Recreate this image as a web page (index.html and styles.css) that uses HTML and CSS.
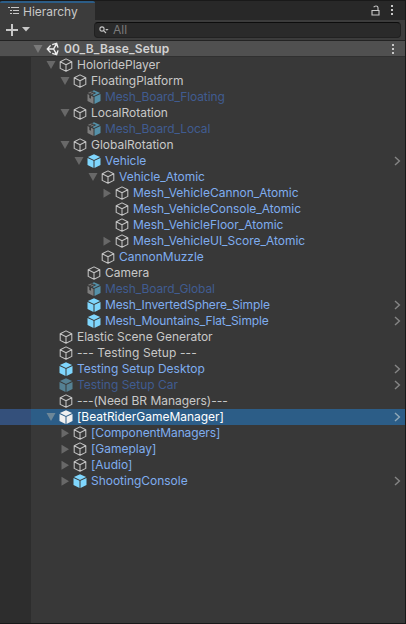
FILE: index.html
```
<!DOCTYPE html>
<html lang="en">
<head>
<meta charset="utf-8">
<title>Hierarchy</title>
<link rel="stylesheet" href="styles.css">
</head>
<body>
<svg class="defs" width="0" height="0" aria-hidden="true">
  <symbol id="cube" viewBox="0 0 14 14"><path class="line" d="M7 .9 12.8 3.7V10.4L7 13.3 1.2 10.4V3.7ZM1.2 3.7 7 6.7 12.8 3.7M7 6.7V13.3"/></symbol>
  <symbol id="solid" viewBox="0 0 14 14"><path d="M7 .2 13.1 3 7 5.9.9 3ZM.5 3.9 6.5 6.8V13.9L.5 11ZM13.5 3.9 7.5 6.8V13.9L13.5 11Z"/></symbol>
  <symbol id="model" viewBox="0 0 14 14"><path class="grey" d="M.5 4 2.3 4.9V8L4 8.8V5.7L6.5 6.9V13.9L.5 11ZM.9 3 4.1 1.5 5.2 2 2.3 3.6ZM3.1 4 6.2 2.4 7.3 3 4.4 4.6Z"/><path class="teal" d="M7 .2 13.1 3 7 5.9 5.4 5.1 9.3 3.1 5 1.2ZM13.5 3.9 7.5 6.8V13.9L13.5 11Z"/></symbol>
  <symbol id="down" viewBox="0 0 10 10"><path d="M.5 1H9.5L5 9Z"/></symbol>
  <symbol id="right" viewBox="0 0 10 10"><path d="M1.5.7 9 5.2 1.5 9.7Z"/></symbol>
  <symbol id="go" viewBox="0 0 7 10"><path class="chev" d="M1 1 5.4 5 1 9"/></symbol>
  <symbol id="dots" viewBox="0 0 4 12"><path d="M1 1H3V3H1ZM1 5H3V7H1ZM1 9H3V11H1Z"/></symbol>
</svg>
<main class="panel">
  <header class="tabs">
    <div class="tab">
      <svg class="tab-icon" viewBox="0 0 11 10"><path d="M0 1H2V2H0ZM3 1H11V2H3ZM2 4H4V5H2ZM5 4H11V5H5ZM2 7H4V8H2ZM5 7H11V8H5Z"/></svg>
      <span>Hierarchy</span>
    </div>
    <div class="tab-tools">
      <svg class="lock" viewBox="0 0 9 11"><path d="M1 5.5H8V10H1ZM7 5.5V2.7Q7 1 5 1 3.2 1 2.7 2.3"/></svg>
      <svg class="dots"><use href="#dots"/></svg>
    </div>
  </header>
  <div class="toolbar">
    <svg class="plus" viewBox="0 0 12 12"><path d="M5 0H7V5H12V7H7V12H5V7H0V5H5Z"/></svg>
    <svg class="caret" viewBox="0 0 8 5"><path d="M0 0H8L4 4.5Z"/></svg>
    <div class="search">
      <svg class="lens" viewBox="0 0 10 8"><circle cx="3" cy="3" r="2.1"/><path d="M4.6 4.6 7 7"/><path class="fill" d="M6.2 3H9.6L7.9 4.8Z"/></svg>
      <span>All</span>
    </div>
  </div>
  <div class="scene">
    <svg class="arrow"><use href="#down"/></svg>
    <svg class="logo" viewBox="0 0 14 14"><path d="M6.2 2.6 10.6 1.3 12 5.6M12 8.4 10.6 12.7 6.2 11.4M4.6 10.6 1.3 7 4.6 3.4M1.3 7H7.6L10.6 1.6M7.6 7 10.6 12.4"/></svg>
    <span class="scene-name">00_B_Base_Setup</span>
    <svg class="dots"><use href="#dots"/></svg>
  </div>
  <div class="content">
    <aside class="gutter"><div class="gutter-selected"></div></aside>
    <div class="tree">
      <div class="row d1"><svg class="arrow"><use href="#down"/></svg><svg class="icon"><use href="#cube"/></svg><span>HoloridePlayer</span></div>
      <div class="row d2"><svg class="arrow"><use href="#down"/></svg><svg class="icon"><use href="#cube"/></svg><span>FloatingPlatform</span></div>
      <div class="row d3 off tight"><i class="arrow"></i><svg class="icon"><use href="#model"/></svg><span>Mesh_Board_Floating</span></div>
      <div class="row d2"><svg class="arrow"><use href="#down"/></svg><svg class="icon"><use href="#cube"/></svg><span>LocalRotation</span></div>
      <div class="row d3 off tight"><i class="arrow"></i><svg class="icon"><use href="#model"/></svg><span>Mesh_Board_Local</span></div>
      <div class="row d2"><svg class="arrow"><use href="#down"/></svg><svg class="icon"><use href="#cube"/></svg><span>GlobalRotation</span></div>
      <div class="row d3 prefab"><svg class="arrow"><use href="#down"/></svg><svg class="icon"><use href="#solid"/></svg><span>Vehicle</span><svg class="go"><use href="#go"/></svg></div>
      <div class="row d4 prefab"><svg class="arrow"><use href="#down"/></svg><svg class="icon"><use href="#cube"/></svg><span>Vehicle_Atomic</span></div>
      <div class="row d5 prefab"><svg class="arrow"><use href="#right"/></svg><svg class="icon"><use href="#cube"/></svg><span>Mesh_VehicleCannon_Atomic</span></div>
      <div class="row d5 prefab"><i class="arrow"></i><svg class="icon"><use href="#cube"/></svg><span>Mesh_VehicleConsole_Atomic</span></div>
      <div class="row d5 prefab"><i class="arrow"></i><svg class="icon"><use href="#cube"/></svg><span>Mesh_VehicleFloor_Atomic</span></div>
      <div class="row d5 prefab"><svg class="arrow"><use href="#right"/></svg><svg class="icon"><use href="#cube"/></svg><span>Mesh_VehicleUI_Score_Atomic</span></div>
      <div class="row d4 prefab"><i class="arrow"></i><svg class="icon"><use href="#cube"/></svg><span>CannonMuzzle</span></div>
      <div class="row d3"><i class="arrow"></i><svg class="icon"><use href="#cube"/></svg><span>Camera</span></div>
      <div class="row d3 off tight"><i class="arrow"></i><svg class="icon"><use href="#model"/></svg><span>Mesh_Board_Global</span></div>
      <div class="row d3 prefab tight"><i class="arrow"></i><svg class="icon"><use href="#solid"/></svg><span>Mesh_InvertedSphere_Simple</span><svg class="go"><use href="#go"/></svg></div>
      <div class="row d3 prefab tight"><i class="arrow"></i><svg class="icon"><use href="#solid"/></svg><span>Mesh_Mountains_Flat_Simple</span><svg class="go"><use href="#go"/></svg></div>
      <div class="row d1"><i class="arrow"></i><svg class="icon"><use href="#cube"/></svg><span>Elastic Scene Generator</span></div>
      <div class="row d1"><i class="arrow"></i><svg class="icon"><use href="#cube"/></svg><span class="loose">--- Testing Setup ---</span></div>
      <div class="row d1 prefab"><i class="arrow"></i><svg class="icon"><use href="#solid"/></svg><span>Testing Setup Desktop</span><svg class="go"><use href="#go"/></svg></div>
      <div class="row d1 off"><i class="arrow"></i><svg class="icon"><use href="#solid"/></svg><span>Testing Setup Car</span><svg class="go"><use href="#go"/></svg></div>
      <div class="row d1"><i class="arrow"></i><svg class="icon"><use href="#cube"/></svg><span>---(Need BR Managers)---</span></div>
      <div class="row d1 selected"><svg class="arrow"><use href="#down"/></svg><svg class="icon"><use href="#solid"/></svg><span>[BeatRiderGameManager]</span><svg class="go"><use href="#go"/></svg></div>
      <div class="row d2 prefab tight"><svg class="arrow"><use href="#right"/></svg><svg class="icon"><use href="#cube"/></svg><span>[ComponentManagers]</span></div>
      <div class="row d2 prefab"><svg class="arrow"><use href="#right"/></svg><svg class="icon"><use href="#cube"/></svg><span>[Gameplay]</span></div>
      <div class="row d2 prefab"><svg class="arrow"><use href="#right"/></svg><svg class="icon"><use href="#cube"/></svg><span>[Audio]</span></div>
      <div class="row d2 prefab"><svg class="arrow"><use href="#right"/></svg><svg class="icon"><use href="#solid"/></svg><span>ShootingConsole</span><svg class="go"><use href="#go"/></svg></div>
    </div>
  </div>
</main>
</body>
</html>
```
FILE: styles.css
```
* { box-sizing: border-box; }
body { margin: 0; background: #191919; font: 12px/16px Inter, "Liberation Sans", sans-serif; letter-spacing: -.02px; color: #c8c8c8; }
svg { display: block; flex: none; fill: currentColor; }
.defs { position: absolute; }
.panel { width: 405px; height: 623px; display: flex; flex-direction: column; background: #383838; overflow: hidden; }
.tabs { height: 20px; flex: none; display: flex; justify-content: space-between; background: #282828; border-top: 1px solid #191919; }
.tab { width: 95px; height: 19px; padding-left: 8px; display: flex; align-items: center; background: #3c3c3c; border-top: 2px solid #2c5d87; border-radius: 2px 2px 0 0; }
.tab-icon { width: 11px; height: 10px; margin: -2px 4px 0 0; }
.tab-tools { display: flex; align-items: flex-start; gap: 10px; padding: 3px 11px 0 0; }
.lock { width: 9px; height: 11px; margin-top: 1px; fill: none; stroke: currentColor; stroke-width: 1.1; }
.dots { width: 4px; height: 12px; }
.toolbar { height: 21px; flex: none; display: flex; align-items: center; padding: 0 4px 1px 6px; background: #3c3c3c; border-bottom: 1px solid #232323; }
.plus { width: 12px; height: 12px; }
.caret { width: 8px; height: 5px; margin-left: 4px; }
.search { margin-left: 64px; flex: 1; height: 16px; display: flex; align-items: center; padding-left: 4px; background: #2a2a2a; border: 1px solid #212121; border-top-color: #0d0d0d; border-radius: 4px; color: #7b7b7b; }
.lens { width: 10px; height: 8px; margin-right: 4px; fill: none; stroke: #c4c4c4; stroke-width: 1.1; }
.lens .fill { fill: #c4c4c4; stroke: none; }
.scene { height: 15px; flex: none; display: flex; align-items: center; padding: 0 10px 0 33px; background: #505050; }
.scene-name { font-weight: 600; letter-spacing: .14px; flex: 1; color: #d2d2d2; }
.arrow { width: 10px; height: 10px; color: #686868; flex: none; }
.scene .arrow { color: #7a7a7a; }
.logo { width: 14px; height: 14px; margin: 0 4px 0 3px; fill: none; stroke: #eee; stroke-width: 1.4; }
.content { flex: 1; display: flex; border-top: 1px solid #303030; }
.gutter { width: 31px; padding-top: 352px; background: #2d2d2d; }
.gutter-selected { height: 16px; background: #34507b; }
.tree { flex: 1; }
.row { height: 16px; display: flex; align-items: center; white-space: nowrap; }
.icon { width: 14px; height: 14px; margin: 0 4px 0 3px; color: #c4c4c4; }
.line { fill: none; stroke: currentColor; stroke-width: 1.05; stroke-linejoin: round; }
.d1 { padding-left: 15px; }
.d2 { padding-left: 29px; }
.d3 { padding-left: 43px; }
.d4 { padding-left: 57px; }
.d5 { padding-left: 71px; }
.tight { letter-spacing: -.12px; }
.loose { letter-spacing: .1px; }
.prefab { color: #7fadef; }
.prefab .icon:has([href="#solid"]) { color: #7fd6fd; }
.off { color: #405c91; }
.off .icon { color: #558193; }
.grey { fill: #7d7d7d; }
.teal { fill: #5591a9; }
.selected { background: #2c5d87; color: #fff; }
.selected .icon { color: #f0f0f0; }
.selected .arrow { color: #6d8798; }
.go { width: 7px; height: 10px; margin: 0 4px 0 auto; color: #858585; }
.selected .go { color: #91a8b8; }
.chev { fill: none; stroke: currentColor; stroke-width: 1.4; }
```
